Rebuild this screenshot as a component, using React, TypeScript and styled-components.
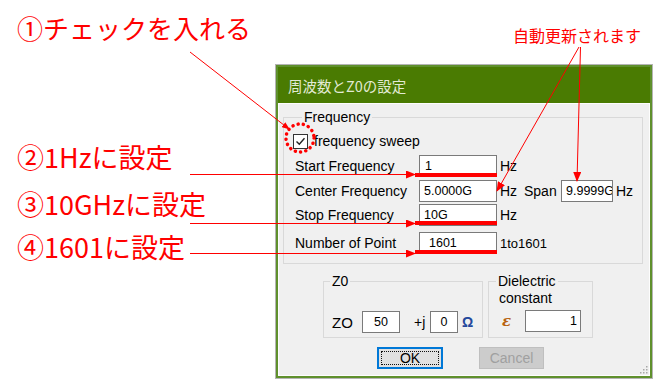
import React from "react";
import styled, { createGlobalStyle } from "styled-components";

const Global = createGlobalStyle`
  html, body { margin: 0; padding: 0; background: #fff; }
  body { font-family: "Liberation Sans", Arial, sans-serif; }
  * { box-sizing: border-box; }
`;

const RED = "#ff0000";
const JP = `"Noto Sans CJK JP", "Noto Sans", sans-serif`;
const UI = `"Liberation Sans", Arial, sans-serif`;

const Page = styled.div`
  position: relative;
  width: 660px;
  height: 380px;
  display: flex;
  overflow: hidden;
  background: #fff;
`;

const NoteColumn = styled.div`
  width: 276px;
  display: flex;
  flex-direction: column;
  padding-left: 17px;
`;

const Note = styled.div<{ $mt: number; $size?: number }>`
  margin-top: ${(p) => p.$mt}px;
  font-family: ${JP};
  font-size: ${(p) => p.$size ?? 27}px;
  font-weight: 400;
  line-height: 32px;
  color: ${RED};
  white-space: nowrap;
`;

const RightColumn = styled.div`
  display: flex;
  flex-direction: column;
  width: 384px;
`;

const TopNote = styled.div`
  height: 65px;
  padding: 25px 0 0 237px;
  font-family: ${JP};
  font-size: 16px;
  line-height: 20px;
  color: ${RED};
  white-space: nowrap;
`;

const Dialog = styled.div`
  width: 376px;
  height: 313px;
  display: flex;
  flex-direction: column;
  border: 2px solid #5f902c;
  box-shadow: 0 0 0 1px #b4b4b4;
  background: #f0f0f0;
`;

const TitleBar = styled.div`
  height: 36px;
  flex: none;
  display: flex;
  align-items: center;
  padding-left: 10px;
  background: #4a7b02;
  color: #e2ead4;
  font-family: ${JP};
  font-size: 14.5px;
`;

const Body = styled.div`
  position: relative;
  flex: 1;
  display: flex;
  flex-direction: column;
  align-items: flex-start;
  box-shadow: inset 0 0 0 1px #fdfdfd;
  font-family: ${UI};
  font-size: 14px;
  color: #000;
`;

const Group = styled.fieldset<{ $mt?: number; $ml?: number; $w: number; $h?: number }>`
  margin: ${(p) => p.$mt ?? 0}px 0 0 ${(p) => p.$ml ?? 0}px;
  padding: 0 0 0 ${(p) => (p.$w > 300 ? 11 : 8)}px;
  width: ${(p) => p.$w}px;
  ${(p) => (p.$h ? `height: ${p.$h}px;` : "")}
  min-width: 0;
  border: 1px solid #d9d9d9;
  display: flex;
  flex-direction: column;
  align-items: flex-start;
`;

const Legend = styled.legend<{ $ml?: number }>`
  margin-left: ${(p) => p.$ml ?? 7}px;
  padding: 0 2px;
  font-size: 14px;
  line-height: 16px;
`;

const CheckRow = styled.div`
  margin: 8px 0 0 -2px;
  height: 16px;
  display: flex;
  align-items: center;
  gap: 6px;
  white-space: nowrap;
`;

const CheckBox = styled.div`
  width: 15px;
  height: 15px;
  border: 1px solid #333;
  background: #fff;
  display: flex;
  align-items: center;
  justify-content: center;
`;

const FieldRow = styled.div<{ $mt: number }>`
  margin-top: ${(p) => p.$mt}px;
  height: 22px;
  display: flex;
  align-items: center;
  white-space: nowrap;
`;

const RowLabel = styled.span<{ $w: number; $size?: number }>`
  width: ${(p) => p.$w}px;
  flex: none;
  font-size: ${(p) => p.$size ?? 14}px;
`;

const TextBox = styled.input<{ $w: number; $align?: string; $pl?: number; $pr?: number }>`
  width: ${(p) => p.$w}px;
  height: 22px;
  flex: none;
  margin: 0;
  padding: 0 ${(p) => p.$pr ?? 2}px 0 ${(p) => p.$pl ?? 4}px;
  border: 1px solid #7a7a7a;
  background: #fff;
  font-family: ${UI};
  font-size: 12.5px;
  color: #000;
  text-align: ${(p) => p.$align ?? "left"};
  outline: none;
`;

const Unit = styled.span<{ $w?: number; $ml?: number; $size?: number }>`
  margin-left: ${(p) => p.$ml ?? 3}px;
  ${(p) => (p.$w ? `width: ${p.$w}px; flex: none;` : "")}
  font-size: ${(p) => p.$size ?? 14}px;
`;

const GroupRow = styled.div`
  margin: 9px 0 0 45px;
  display: flex;
  gap: 5px;
  align-items: flex-start;
`;

const SubText = styled.div`
  margin-top: 1px;
  line-height: 16px;
  padding-left: 2px;
`;

const Symbol = styled.span<{ $color: string; $italic?: boolean; $w: number; $size?: number; $pl?: number; $ml?: number }>`
  width: ${(p) => p.$w}px;
  flex: none;
  margin-left: ${(p) => p.$ml ?? 0}px;
  padding-left: ${(p) => p.$pl ?? 0}px;
  color: ${(p) => p.$color};
  font-style: ${(p) => (p.$italic ? "italic" : "normal")};
  font-family: ${(p) => (p.$italic ? `"DejaVu Serif", "Liberation Serif", serif` : UI)};
  font-size: ${(p) => p.$size ?? 14}px;
  font-weight: 700;
`;

const ButtonRow = styled.div`
  margin: 9px 0 0 99px;
  display: flex;
  gap: 36px;
`;

const Button = styled.div<{ $primary?: boolean; $w: number }>`
  width: ${(p) => p.$w}px;
  height: 22px;
  display: flex;
  align-items: center;
  justify-content: center;
  font-size: 14px;
  border: 1px solid ${(p) => (p.$primary ? "#0078d7" : "#bfbfbf")};
  background: ${(p) => (p.$primary ? "#e1e1e1" : "#cccccc")};
  color: ${(p) => (p.$primary ? "#000" : "#a0a0a0")};
  box-shadow: ${(p) => (p.$primary ? "inset 0 0 0 1px #0078d7" : "none")};
`;

const Focus = styled.span`
  display: flex;
  align-items: center;
  justify-content: center;
  width: calc(100% - 6px);
  height: calc(100% - 6px);
  border: 1px dotted #111;
`;

const Grip = styled.svg`
  position: absolute;
  right: 2px;
  bottom: 2px;
`;

const Overlay = styled.svg`
  position: absolute;
  left: 0;
  top: 0;
  pointer-events: none;
`;

function Annotations() {
  return (
    <Overlay width={660} height={380} viewBox="0 0 660 380">
      <defs>
        <marker id="ah" markerWidth="10" markerHeight="8" refX="9" refY="4" orient="auto" markerUnits="userSpaceOnUse">
          <path d="M0 0 L10 4 L0 8 Z" fill={RED} />
        </marker>
        <marker id="ahs" markerWidth="8" markerHeight="6" refX="7" refY="3" orient="auto" markerUnits="userSpaceOnUse">
          <path d="M0 0 L8 3 L0 6 Z" fill={RED} />
        </marker>
      </defs>
      <line x1={190} y1={52} x2={289} y2={129} stroke={RED} strokeWidth={1} markerEnd="url(#ahs)" />
      <line x1={190} y1={174.5} x2={415} y2={174.5} stroke={RED} strokeWidth={1} markerEnd="url(#ah)" />
      <line x1={190} y1={223.5} x2={415} y2={223.5} stroke={RED} strokeWidth={1} markerEnd="url(#ah)" />
      <line x1={190} y1={253.5} x2={415} y2={253.5} stroke={RED} strokeWidth={1} markerEnd="url(#ah)" />
      <rect x={415} y={173} width={82} height={4} fill={RED} />
      <rect x={415} y={221} width={82} height={4} fill={RED} />
      <rect x={415} y={250} width={82} height={4} fill={RED} />
      <circle cx={300} cy={138} r={14} fill="none" stroke={RED} strokeWidth={3.5} strokeDasharray="0.1 5.2" strokeLinecap="round" />
      <line x1={579} y1={47} x2={497} y2={191} stroke={RED} strokeWidth={1} markerEnd="url(#ah)" />
      <line x1={580.5} y1={47} x2={577} y2={181} stroke={RED} strokeWidth={1} markerEnd="url(#ah)" />
    </Overlay>
  );
}

export default function App() {
  return (
    <>
      <Global />
      <Page>
        <NoteColumn>
          <Note $mt={12} $size={26}>①チェックを入れる</Note>
          <Note $mt={97}>②1Hzに設定</Note>
          <Note $mt={15}>③10GHzに設定</Note>
          <Note $mt={11}>④1601に設定</Note>
        </NoteColumn>
        <RightColumn>
          <TopNote>自動更新されます</TopNote>
          <Dialog>
            <TitleBar>周波数とZ0の設定</TitleBar>
            <Body>
              <Group $mt={6} $ml={5} $w={360} $h={155}>
                <Legend>Frequency</Legend>
                <CheckRow>
                  <CheckBox>
                    <svg width="11" height="11" viewBox="0 0 11 11">
                      <path d="M1.5 5.5 L4.3 8.3 L9.5 2.2" fill="none" stroke="#222" strokeWidth="1.4" />
                    </svg>
                  </CheckBox>
                  <span>frequency sweep</span>
                </CheckRow>
                <FieldRow $mt={6}>
                  <RowLabel $w={124}>Start Frequency</RowLabel>
                  <TextBox $w={78} readOnly value="1" $pl={5} />
                  <Unit>Hz</Unit>
                </FieldRow>
                <FieldRow $mt={3}>
                  <RowLabel $w={124}>Center Frequency</RowLabel>
                  <TextBox $w={78} readOnly value="5.0000G" />
                  <Unit $w={24}>Hz</Unit>
                  <RowLabel $w={37}>Span</RowLabel>
                  <TextBox $w={52} readOnly value="9.9999G" $pl={4} $pr={0} />
                  <Unit>Hz</Unit>
                </FieldRow>
                <FieldRow $mt={2}>
                  <RowLabel $w={124}>Stop Frequency</RowLabel>
                  <TextBox $w={78} readOnly value="10G" />
                  <Unit>Hz</Unit>
                </FieldRow>
                <FieldRow $mt={6}>
                  <RowLabel $w={124}>Number of Point</RowLabel>
                  <TextBox $w={78} readOnly value="1601" $pl={9} />
                  <Unit $size={13}>1to1601</Unit>
                </FieldRow>
              </Group>
              <GroupRow>
                <Group $w={160} $h={65}>
                  <Legend $ml={-2}>Z0</Legend>
                  <FieldRow $mt={22}>
                    <RowLabel $w={30} $size={15}>ZO</RowLabel>
                    <TextBox $w={38} readOnly value="50" $align="center" $pl={0} $pr={0} />
                    <Unit $w={16} $ml={14}>+j</Unit>
                    <TextBox $w={28} readOnly value="0" $align="center" $pl={0} $pr={0} />
                    <Symbol $color="#24489c" $w={14} $ml={4}>Ω</Symbol>
                  </FieldRow>
                </Group>
                <Group $w={105} $h={65}>
                  <Legend $ml={-1}>Dielectric</Legend>
                  <SubText>constant</SubText>
                  <FieldRow $mt={4}>
                    <Symbol $color="#b8620e" $italic $w={28} $size={15} $pl={5}>ε</Symbol>
                    <TextBox $w={56} readOnly value="1" $align="right" $pr={3} />
                  </FieldRow>
                </Group>
              </GroupRow>
              <ButtonRow>
                <Button $primary $w={66}>
                  <Focus>OK</Focus>
                </Button>
                <Button $w={65}>Cancel</Button>
              </ButtonRow>
              <Grip width="10" height="10" viewBox="0 0 10 10">
                {[
                  [8, 2],
                  [5, 5],
                  [8, 5],
                  [2, 8],
                  [5, 8],
                  [8, 8],
                ].map(([x, y], i) => (
                  <rect key={i} x={x} y={y} width={1.5} height={1.5} fill="#a8a8a8" />
                ))}
              </Grip>
            </Body>
          </Dialog>
        </RightColumn>
        <Annotations />
      </Page>
    </>
  );
}
